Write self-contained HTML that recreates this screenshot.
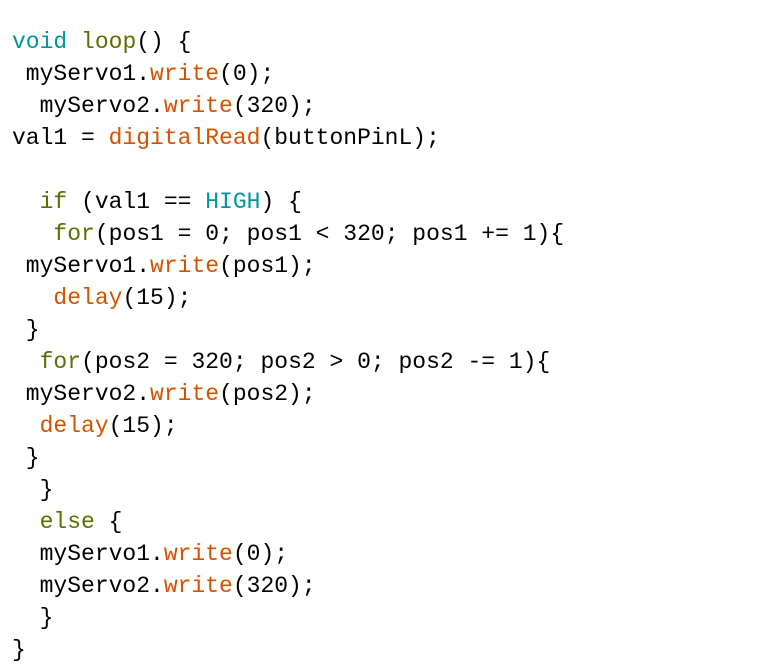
<!DOCTYPE html>
<html><head><meta charset="utf-8"><style>
html,body{margin:0;padding:0;background:#fff;width:764px;height:670px;overflow:hidden}
pre{position:absolute;left:12px;top:26px;margin:0;font-family:"Liberation Mono","DejaVu Sans Mono",monospace;font-size:23px;line-height:32px;color:#000}
.t{color:#00979c}.o{color:#5e6d03}.r{color:#d35400}
</style></head><body><pre><span class="t">void</span> <span class="o">loop</span>() {
 myServo1.<span class="r">write</span>(0);
  myServo2.<span class="r">write</span>(320);
val1 = <span class="r">digitalRead</span>(buttonPinL);

  <span class="o">if</span> (val1 == <span class="t">HIGH</span>) {
   <span class="o">for</span>(pos1 = 0; pos1 &lt; 320; pos1 += 1){
 myServo1.<span class="r">write</span>(pos1);
   <span class="r">delay</span>(15);
 }
  <span class="o">for</span>(pos2 = 320; pos2 &gt; 0; pos2 -= 1){
 myServo2.<span class="r">write</span>(pos2);
  <span class="r">delay</span>(15);
 }
  }
  <span class="o">else</span> {
  myServo1.<span class="r">write</span>(0);
  myServo2.<span class="r">write</span>(320);
  }
}</pre></body></html>
